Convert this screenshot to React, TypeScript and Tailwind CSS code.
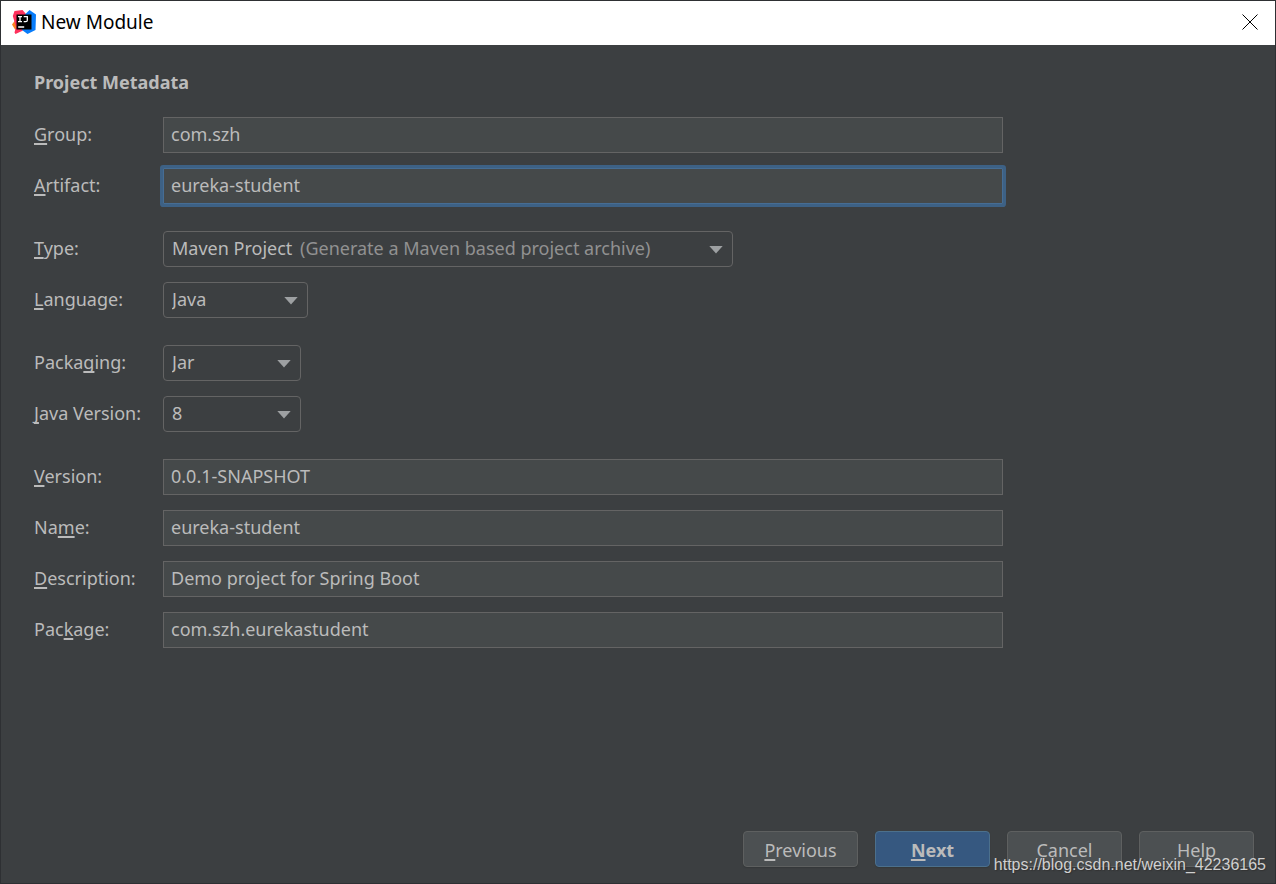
import { useState } from 'react';
import type { ReactNode } from 'react';

const fieldClass = 'h-9 w-full max-w-[840px] border bg-[#45494a] px-[7px] pb-[2px] text-[#bbbbbb] outline-none';

function Mnemonic({ text, at = 0 }: { text: string; at?: number }) {
    return (
        <>
            {text.slice(0, at)}
            <span className="underline decoration-2 underline-offset-2 [text-decoration-skip-ink:none]">{text[at]}</span>
            {text.slice(at + 1)}
        </>
    );
}

function Row({ id, label, at, children }: { id: string; label: string; at?: number; children: ReactNode }) {
    return (
        <div className="flex h-9 items-center">
            <label htmlFor={id} className="w-[129px] shrink-0 pb-[2px] whitespace-nowrap">
                <Mnemonic text={label} at={at} />
            </label>
            {children}
        </div>
    );
}

type TextRowProps = {
    id: string;
    label: string;
    at?: number;
    initial: string;
    active?: boolean;
};

function TextRow({ id, label, at, initial, active = false }: TextRowProps) {
    const [value, setValue] = useState(initial);

    return (
        <Row id={id} label={label} at={at}>
            <input
                id={id}
                type="text"
                value={value}
                onChange={(e) => setValue(e.target.value)}
                className={`${fieldClass} ${
                    active ? 'rounded-[1px] border-[#466d94] shadow-[0_0_0_3px_#3d6185]' : 'border-[#646464]'
                }`}
            />
        </Row>
    );
}

type SelectRowProps = {
    id: string;
    label: string;
    at?: number;
    options: string[];
    hint?: string;
    width: string;
};

function SelectRow({ id, label, at, options, hint, width }: SelectRowProps) {
    return (
        <Row id={id} label={label} at={at}>
            <div className={`relative h-9 ${width}`}>
                <select
                    id={id}
                    className="h-full w-full appearance-none rounded-[4px] border border-[#646464] bg-[#3c3f41] pb-[2px] pl-2 text-[#bbbbbb] outline-none"
                >
                    {options.map((option) => (
                        <option key={option}>{option}</option>
                    ))}
                </select>
                {hint && (
                    <span className="pointer-events-none absolute inset-y-0 left-[137px] flex items-center pb-[2px] whitespace-nowrap text-[#919191]">
                        {hint}
                    </span>
                )}
                <svg
                    className="pointer-events-none absolute top-[15px] right-[10px] h-2 w-[14px]"
                    viewBox="0 0 14 8"
                    fill="#9da0a2"
                    aria-hidden="true"
                >
                    <path d="M0.3 0h13.4L7 7.6z" />
                </svg>
            </div>
        </Row>
    );
}

function DialogButton({ children, primary = false }: { children: ReactNode; primary?: boolean }) {
    return (
        <button
            type="button"
            className={
                primary
                    ? 'h-9 w-[115px] rounded-[4px] border border-[#4c708c] bg-[#365880] pt-px font-bold text-[#bbbbbb] shadow-[0_1px_1px_#35383a]'
                    : 'h-9 w-[115px] rounded-[4px] border border-[#5e6060] bg-[#4c5052] pt-px text-[#bbbbbb] shadow-[0_1px_1px_#35383a]'
            }
        >
            {children}
        </button>
    );
}

function IdeaLogo() {
    return (
        <svg className="h-6 w-6" viewBox="0 0 24 24" aria-hidden="true">
            <path d="M0 14.500 3 10.500 6 10v9l-3 .5z" fill="#fc801d" />
            <path d="M2.500 1 10.500 0 14 4v14l-4 3-6.500 3L2.500 22.500 4 17 .8 6z" fill="#fe315d" />
            <path d="M13 4.500 17.500 0 24 4.500 23.500 20 15.500 24 10 20z" fill="#087cfa" />
            <path d="M4.500 4.500h15v15h-15z" fill="#000" />
            <path
                d="M6 6.700h4M8 6.700v5M6 11.700h4M11.700 6.700h3.600v3.500q0 1.500-1.500 1.500h-2.100M6.200 17h6"
                stroke="#fff"
                strokeWidth="1.300"
                fill="none"
            />
        </svg>
    );
}

export default function App() {
    return (
        <div className="relative flex min-h-screen flex-col border border-[#2e3033] bg-[#3c3f41] font-['Noto_Sans',sans-serif] text-[18px] leading-6 text-[#bbbbbb]">
            <header className="flex h-11 items-center justify-between bg-white pr-[17px] pb-[2px] pl-[11px] text-black">
                <div className="flex items-center gap-[5px]">
                    <IdeaLogo />
                    <h1 className="text-[19px]">New Module</h1>
                </div>
                <button type="button" aria-label="Close">
                    <svg className="h-4 w-4" viewBox="0 0 16 16" stroke="#000" strokeWidth="1" aria-hidden="true">
                        <path d="M.5.5l15 15M15.500.5l-15 15" />
                    </svg>
                </button>
            </header>

            <form className="flex flex-1 flex-col" onSubmit={(e) => e.preventDefault()}>
                <main className="flex flex-1 flex-col gap-[27px] px-[33px] pt-[25px]">
                    <div className="flex flex-col">
                        <h2 className="mb-[23px] font-bold">Project Metadata</h2>
                        <div className="flex flex-col gap-[15px]">
                            <TextRow id="group" label="Group:" initial="com.szh" />
                            <TextRow id="artifact" label="Artifact:" initial="eureka-student" active />
                        </div>
                    </div>
                    <div className="flex flex-col gap-[15px]">
                        <SelectRow
                            id="type"
                            label="Type:"
                            options={['Maven Project', 'Gradle Project']}
                            hint="(Generate a Maven based project archive)"
                            width="w-[570px]"
                        />
                        <SelectRow id="language" label="Language:" options={['Java', 'Kotlin', 'Groovy']} width="w-[145px]" />
                    </div>
                    <div className="flex flex-col gap-[15px]">
                        <SelectRow id="packaging" label="Packaging:" at={5} options={['Jar', 'War']} width="w-[138px]" />
                        <SelectRow id="java-version" label="Java Version:" options={['8', '11', '14']} width="w-[138px]" />
                    </div>
                    <div className="flex flex-col gap-[15px]">
                        <TextRow id="version" label="Version:" initial="0.0.1-SNAPSHOT" />
                        <TextRow id="name" label="Name:" at={2} initial="eureka-student" />
                        <TextRow id="description" label="Description:" initial="Demo project for Spring Boot" />
                        <TextRow id="package" label="Package:" at={3} initial="com.szh.eurekastudent" />
                    </div>
                </main>

                <footer className="flex justify-end gap-[17px] pr-[21px] pb-4">
                    <DialogButton>
                        <Mnemonic text="Previous" />
                    </DialogButton>
                    <DialogButton primary>
                        <Mnemonic text="Next" />
                    </DialogButton>
                    <DialogButton>Cancel</DialogButton>
                    <DialogButton>Help</DialogButton>
                </footer>
            </form>

            <span className="pointer-events-none absolute right-[9px] bottom-[6px] font-['Liberation_Sans',sans-serif] text-[16px] text-[#d0d0d0] [text-shadow:1px_1px_1px_#333]">
                https://blog.csdn.net/weixin_42236165
            </span>
        </div>
    );
}
